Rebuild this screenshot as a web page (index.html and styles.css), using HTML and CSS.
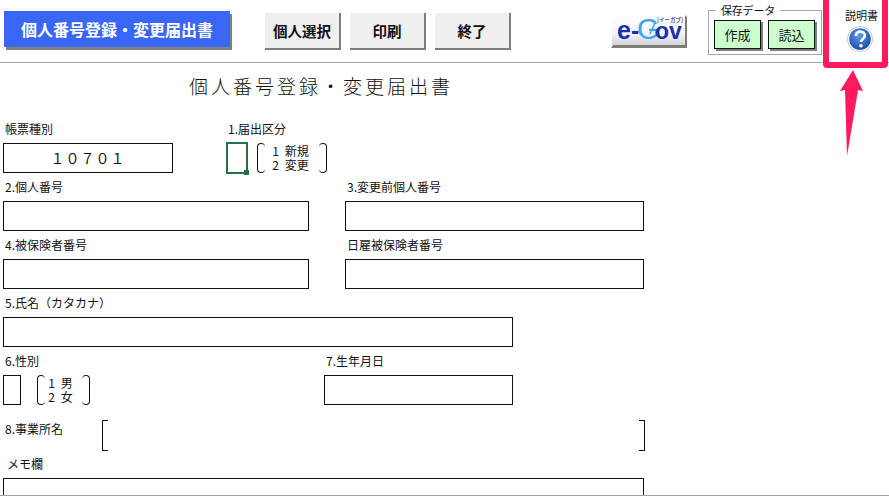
FILE: index.html
```html
<!DOCTYPE html>
<html lang="ja">
<head>
<meta charset="utf-8">
<title>個人番号登録・変更届出書</title>
<link rel="stylesheet" href="styles.css">
</head>
<body>
<header class="toolbar">
  <div class="app-title">個人番号登録・変更届出書</div>
  <nav class="actions">
    <button class="act">個人選択</button>
    <button class="act">印刷</button>
    <button class="act">終了</button>
  </nav>
  <svg class="egov" width="78" height="38" viewBox="0 0 78 38">
    <defs>
      <linearGradient id="bev" x1="0" y1="0" x2="0" y2="1">
        <stop offset="0" stop-color="#ffffff"/>
        <stop offset="0.6" stop-color="#f6f6fa"/>
        <stop offset="1" stop-color="#d2d2da"/>
      </linearGradient>
    </defs>
    <path d="M3 33 L75 33 L75 3 L77 5 L77 36 L1 36 Z" fill="#7c7c78"/>
    <rect x="2" y="2" width="73" height="31" fill="url(#bev)"/>
    <text class="eg-main" x="7" y="27" fill="#1c2fa8">e-</text>
    <text class="eg-g" x="27" y="27" fill="#3aa6e8">G</text>
    <path d="M40 22 L45 11" stroke="#3aa6e8" stroke-width="1.6" fill="none"/>
    <text class="eg-ov" x="45" y="27" fill="#1c2fa8">ov</text>
    <text class="eg-small" x="47" y="10" fill="#5a4fc0">[イーガブ]</text>
  </svg>
  <fieldset class="save">
    <legend class="save-legend">保存データ</legend>
    <button class="green">作成</button>
    <button class="green">読込</button>
  </fieldset>
</header>

<main class="sheet">
  <h1 class="sheet-title">個人番号登録・変更届出書</h1>

  <div class="row">
    <div class="field w170">
      <label class="lab">帳票種別</label>
      <div class="box code">１０７０１</div>
    </div>
    <div class="field ml53">
      <label class="lab">1.届出区分</label>
      <div class="pair">
        <div class="box active w22"><i class="handle"></i></div>
        <div class="opts w70">
          <span>1 新規</span>
          <span>2 変更</span>
        </div>
      </div>
    </div>
  </div>

  <div class="row">
    <div class="field w306">
      <label class="lab">2.個人番号</label>
      <div class="box"></div>
    </div>
    <div class="field w299 ml36">
      <label class="lab">3.変更前個人番号</label>
      <div class="box"></div>
    </div>
  </div>

  <div class="row">
    <div class="field w306">
      <label class="lab">4.被保険者番号</label>
      <div class="box"></div>
    </div>
    <div class="field w299 ml36">
      <label class="lab">日雇被保険者番号</label>
      <div class="box"></div>
    </div>
  </div>

  <div class="row">
    <div class="field w510">
      <label class="lab">5.氏名（カタカナ）</label>
      <div class="box"></div>
    </div>
  </div>

  <div class="row">
    <div class="field w321">
      <label class="lab">6.性別</label>
      <div class="pair gap16">
        <div class="box w18"></div>
        <div class="opts w53">
          <span>1 男</span>
          <span>2 女</span>
        </div>
      </div>
    </div>
    <div class="field w189">
      <label class="lab">7.生年月日</label>
      <div class="box"></div>
    </div>
  </div>

  <div class="row office">
    <label class="lab w99 pt2">8.事業所名</label>
    <div class="square"></div>
  </div>

  <div class="row memo">
    <div class="field w641">
      <label class="lab indent">メモ欄</label>
      <div class="box tall"></div>
    </div>
  </div>
</main>

<div class="window-edge"></div>

<aside class="callout">
  <span class="callout-label">説明書</span>
  <svg width="26" height="26" viewBox="0 0 26 26">
    <defs>
      <radialGradient id="q" cx="0.45" cy="0.35" r="0.7">
        <stop offset="0" stop-color="#5f9be6"/>
        <stop offset="0.7" stop-color="#2a62bf"/>
        <stop offset="1" stop-color="#1c3f96"/>
      </radialGradient>
    </defs>
    <circle cx="13" cy="13" r="12.8" fill="#b4bccb"/>
    <circle cx="13" cy="13" r="12" fill="#ffffff"/>
    <circle cx="13" cy="13" r="10.8" fill="url(#q)"/>
    <path d="M8.8 10 C8.8 7 10.8 5.6 13.2 5.6 C16 5.6 17.8 7.4 17.8 9.7 C17.8 12.8 14 13 14 16" fill="none" stroke="#fff" stroke-width="2.6"/>
    <circle cx="14" cy="19.8" r="1.8" fill="#fff"/>
  </svg>
</aside>
<svg class="arrow" width="27" height="90" viewBox="0 0 27 90">
  <path d="M14 1 L24 22 L19 21 L8 87 L6 21 L1 22 Z" fill="#ff1a5e"/>
</svg>
</body>
</html>
```
FILE: styles.css
```css
* { box-sizing: border-box; }
html, body { margin: 0; padding: 0; }
body {
  width: 889px;
  height: 499px;
  overflow: hidden;
  position: relative;
  background: #fff;
  color: #111;
  font-family: "Noto Sans CJK JP", "Noto Sans", sans-serif;
}
button { font-family: inherit; padding: 0; cursor: pointer; }

.toolbar {
  display: flex;
  align-items: flex-start;
  height: 63px;
  border-bottom: 1px solid #a6a6a6;
}
.app-title {
  margin: 11px 0 0 4px;
  width: 226px;
  height: 36px;
  background: #3a66f6;
  color: #fff;
  font-size: 16px;
  font-weight: 700;
  line-height: 36px;
  text-align: center;
  box-shadow: 2px 3px 0 #808080;
  white-space: nowrap;
}
.actions { display: flex; gap: 9px; margin: 13px 0 0 35px; }
.act {
  width: 76px;
  height: 37px;
  background: #efefef;
  border: 0;
  border-right: 2px solid #7d7d7d;
  border-bottom: 2px solid #7d7d7d;
  color: #111;
  font-size: 14.5px;
  font-weight: 700;
}
.egov { margin: 12px 0 0 99px; flex: none; }
.eg-main { font: 700 25px "Liberation Sans", sans-serif; }
.eg-ov { font: 700 23px "Liberation Sans", sans-serif; }
.eg-g { font: 400 29px "Liberation Sans", sans-serif; }
.eg-small { font: 700 5.5px "Noto Sans CJK JP", sans-serif; }

.save {
  display: flex;
  gap: 7px;
  margin: 4px 0 0 20px;
  padding: 0 0 0 5px;
  width: 114px;
  height: 51px;
  min-width: 0;
  border: 1px solid #a6a6a6;
}
.save-legend {
  margin-left: 2px;
  padding: 0 5px;
  font-size: 11px;
  letter-spacing: -0.2px;
  line-height: 13px;
}
.green {
  width: 47px;
  height: 29px;
  margin-top: 3px;
  background: #ccffcc;
  border: 1px solid #111;
  box-shadow: 2px 2px 0 #808080;
  color: #111;
  font-size: 13px;
}

.sheet { padding-left: 3px; }
.sheet-title {
  margin: 0;
  padding: 10px 0 0 186px;
  height: 59px;
  font-size: 19px;
  font-weight: 300;
  letter-spacing: 3px;
  line-height: 26px;
  white-space: nowrap;
}
.row { display: flex; margin-bottom: 7px; }
.field { display: flex; flex-direction: column; }
.lab {
  display: block;
  height: 21px;
  padding-left: 2px;
  font-size: 12px;
  line-height: 14px;
  white-space: nowrap;
}
.indent { padding-left: 4px; }
.box {
  height: 30px;
  border: 1px solid #111;
  background: #fff;
}
.code {
  font-size: 14px;
  line-height: 28px;
  text-align: center;
  letter-spacing: 1px;
}
.w170 { width: 170px; }
.w306 { width: 306px; }
.w299 { width: 299px; }
.w510 { width: 510px; }
.w321 { width: 321px; }
.w189 { width: 189px; }
.w641 { width: 641px; }
.w99 { width: 99px; flex: none; }
.w22 { width: 22px; flex: none; }
.w18 { width: 18px; flex: none; }
.w70 { width: 70px; padding-right: 3px; }
.w53 { width: 53px; padding-right: 6px; }
.ml53 { margin-left: 53px; }
.ml36 { margin-left: 36px; }
.pt2 { padding-top: 2px; }

.pair { display: flex; gap: 9px; height: 30px; }
.gap16 { gap: 16px; }
.active {
  position: relative;
  height: 32px;
  margin-top: -1px;
  border: 2px solid #217346;
}
.handle {
  position: absolute;
  right: -3px;
  bottom: -3px;
  width: 5px;
  height: 5px;
  background: #217346;
}
.opts {
  position: relative;
  display: flex;
  flex-direction: column;
  align-items: center;
  height: 30px;
  font-size: 12px;
  line-height: 14px;
  word-spacing: 3px;
  padding-top: 1px;
}
.opts::before,
.opts::after {
  content: "";
  position: absolute;
  top: 0;
  bottom: 0;
  width: 7px;
  border: 1px solid #111;
  border-radius: 6px;
}
.opts::before { left: 0; border-right: 0; }
.opts::after { right: 0; border-left: 0; }

.office { height: 31px; margin-bottom: 6px; margin-top: 15px; }
.square {
  width: 543px;
  height: 31px;
  position: relative;
}
.square::before,
.square::after {
  content: "";
  position: absolute;
  top: 0;
  bottom: 0;
  width: 5px;
  border: 1px solid #111;
}
.square::before { left: 0; border-right: 0; }
.square::after { right: 0; border-left: 0; }
.memo { margin-bottom: 0; }
.tall { height: 21px; border-bottom: 0; }

.window-edge {
  position: absolute;
  left: 0;
  right: 0;
  bottom: 0;
  height: 4px;
  background: #fff;
  border-top: 1px solid #a6a6a6;
}
.callout {
  position: absolute;
  left: 823px;
  top: -6px;
  width: 65px;
  height: 74px;
  border: 6px solid #ff1a5e;
  border-radius: 4px;
  background: #fff;
  display: flex;
  flex-direction: column;
  align-items: center;
}
.callout-label {
  margin: 8px 0 1px 12px;
  font-size: 11px;
  line-height: 15px;
  white-space: nowrap;
}
.callout svg { margin-left: 8px; margin-top: 2px; }
.arrow { position: absolute; left: 839px; top: 69px; }
```
